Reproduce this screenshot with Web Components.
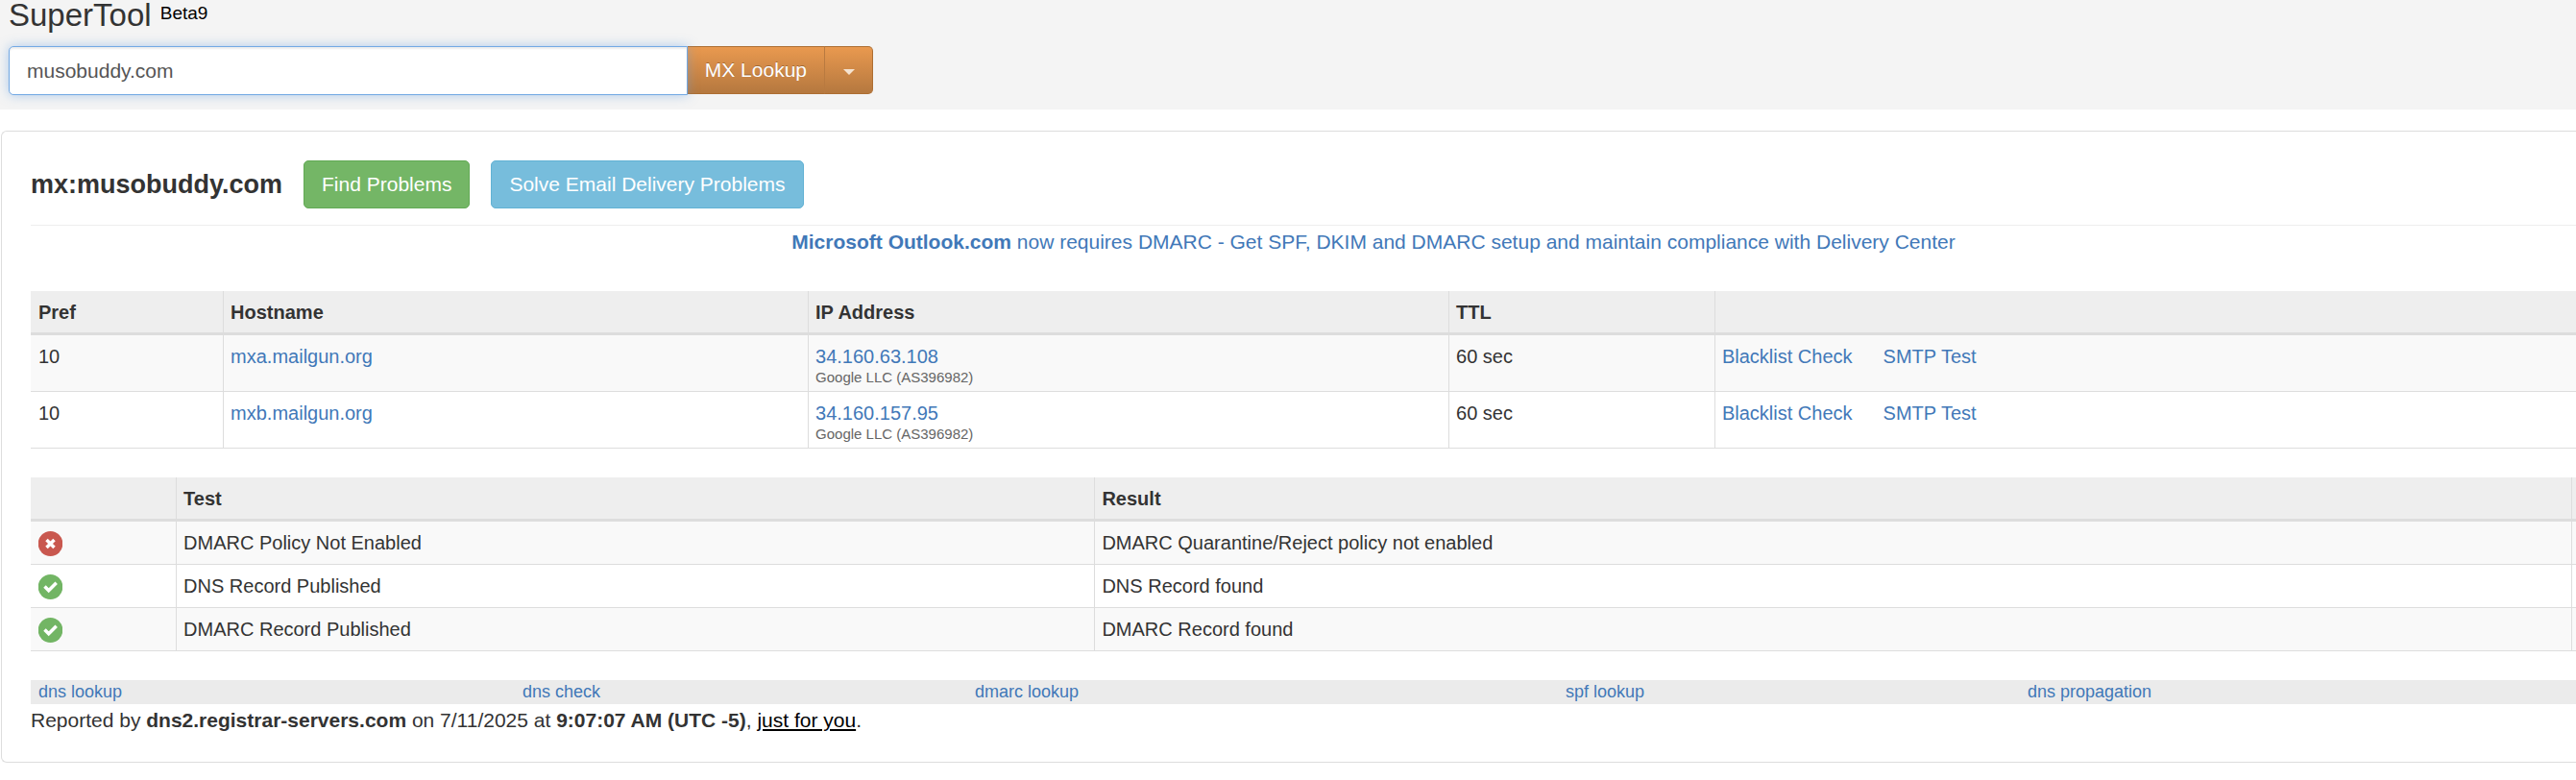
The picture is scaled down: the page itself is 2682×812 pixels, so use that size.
<!DOCTYPE html>
<html lang="en">
<head>
<meta charset="utf-8">
<title>SuperTool</title>
<style>
body { margin: 0; background: #fff; color: #333; font: 20px/27px "Liberation Sans", Arial, sans-serif; }
</style>
</head>
<body>
<super-tool></super-tool>
<script>
const LINK = `a { color: #4178b8; text-decoration: none; } a:hover { text-decoration: underline; }`;

function define(name, html, setup) {
  customElements.define(name, class extends HTMLElement {
    connectedCallback() {
      if (this.shadowRoot) return;
      const t = document.createElement('template');
      t.innerHTML = html;
      const root = this.attachShadow({ mode: 'open' });
      root.append(t.content.cloneNode(true));
      if (setup) setup(this, root);
    }
  });
}

define('status-icon', `
<style>
:host { display: block; height: 28px; padding-top: 1px; box-sizing: border-box; }
svg { display: block; width: 25px; height: 26px; }
.ok, :host([state="ok"]) .bad { display: none; }
:host([state="ok"]) .ok { display: block; }
</style>
<svg class="bad" viewBox="0 0 25 26" role="img" aria-label="Problem"><ellipse cx="12.5" cy="13" rx="12.8" ry="13" fill="#c9584f"/><path d="M8.500 9l8 8M16.500 9l-8 8" stroke="#fff" stroke-width="3.500"/></svg>
<svg class="ok" viewBox="0 0 25 26" role="img" aria-label="OK"><ellipse cx="12.5" cy="13" rx="12.8" ry="13" fill="#72b564"/><path d="M6.500 12.500l4.200 4.300 8-8" fill="none" stroke="#fff" stroke-width="3.500"/></svg>`);

define('action-button', `
<style>
:host { display: block; }
button { height: 50px; padding: 0 18px; border: 1px solid #62a955; border-radius: 5px; background: #74b666; color: #fff; font: 21px/28px "Liberation Sans", Arial, sans-serif; white-space: nowrap; }
:host([kind="info"]) button { background: #77bddc; border-color: #62b2d4; }
</style>
<button type="button"><slot></slot></button>`);

define('search-header', `
<style>
:host { display: block; height: 114px; box-sizing: border-box; padding: 0 9px; background: #f4f4f4; }
h1 { margin: 0; height: 48px; font-weight: 400; font-size: 33px; line-height: 32px; }
sup { color: #000; font-size: 19px; line-height: 19px; vertical-align: 7px; }
form { display: flex; align-items: flex-start; width: 900px; max-width: 100%; }
input { flex: 1; min-width: 0; height: 51px; box-sizing: border-box; padding: 0 18px; border: 1px solid #73a9e4; border-radius: 5px 0 0 5px; background: #fff; color: #555; font: 21px "Liberation Sans", Arial, sans-serif; position: relative; box-shadow: inset 0 2px 2px rgba(0,0,0,.07), 0 0 12px rgba(102,160,225,.5); outline: 0; }
button { height: 50px; box-sizing: border-box; border: 1px solid #ad6e32; border-left-width: 0; background: linear-gradient(#e9994f, #b5783f); color: #fff; font: 21px "Liberation Sans", Arial, sans-serif; text-shadow: 0 -1px 0 rgba(0,0,0,.25); white-space: nowrap; }
.go { padding: 0 18px; border-right-color: #b97a40; }
.more { width: 50px; padding: 0; border-radius: 0 5px 5px 0; }
svg { display: block; width: 12px; height: 6px; margin: 4px auto 0; }
</style>
<h1>SuperTool <sup>Beta9</sup></h1>
<form><input type="text" aria-label="Domain" value="musobuddy.com"><button class="go" type="button">MX Lookup</button><button class="more" type="button" aria-label="More lookups"><svg viewBox="0 0 12 6"><path d="M0 0h12l-6 6z" fill="#f5e3d0"/></svg></button></form>`);

const TABLE = `
:host { display: block; }
table { width: 100%; table-layout: fixed; border-spacing: 0; }
th, td { padding: 9px 7px 7px; text-align: left; vertical-align: top; border-bottom: 1px solid #ddd; border-left: 1px solid #ddd; white-space: nowrap; }
th:first-child, td:first-child { border-left: 0; padding-left: 8px; }
th { background: #eee; border-bottom-width: 3px; }
tbody tr:nth-child(odd) { background: #f9f9f9; }
${LINK}`;

define('record-table', `
<style>${TABLE}
.pref { width: 7.550%; } .host { width: 22.980%; } .ip { width: 25.170%; } .ttl { width: 10.450%; }
small { display: block; font-size: 15px; line-height: 15px; color: #666; }
.links { display: flex; gap: 32px; }
</style>
<table>
<colgroup><col class="pref"><col class="host"><col class="ip"><col class="ttl"><col></colgroup>
<thead><tr><th>Pref</th><th>Hostname</th><th>IP Address</th><th>TTL</th><th></th></tr></thead>
<tbody></tbody>
</table>`, (el, root) => {
  const rows = [['mxa.mailgun.org', '34.160.63.108'], ['mxb.mailgun.org', '34.160.157.95']];
  root.querySelector('tbody').innerHTML = rows.map(([host, ip]) => `<tr><td>10</td><td><a href="#">${host}</a></td><td><a href="#">${ip}</a><small>Google LLC (AS396982)</small></td><td>60 sec</td><td><div class="links"><a href="#">Blacklist Check</a><a href="#">SMTP Test</a></div></td></tr>`).join('');
});

define('test-table', `
<style>${TABLE}
th:last-child, td:last-child { padding-left: 0; padding-right: 0; }
.state { width: 5.700%; } .test { width: 36.090%; } .end { width: 5px; }
</style>
<table>
<colgroup><col class="state"><col class="test"><col><col class="end"></colgroup>
<thead><tr><th></th><th>Test</th><th>Result</th><th></th></tr></thead>
<tbody></tbody>
</table>`, (el, root) => {
  const rows = [
    ['bad', 'DMARC Policy Not Enabled', 'DMARC Quarantine/Reject policy not enabled'],
    ['ok', 'DNS Record Published', 'DNS Record found'],
    ['ok', 'DMARC Record Published', 'DMARC Record found']];
  root.querySelector('tbody').innerHTML = rows.map(([s, t, r]) => `<tr><td><status-icon state="${s}"></status-icon></td><td>${t}</td><td>${r}</td><td></td></tr>`).join('');
});

define('lookup-links', `
<style>
:host { display: block; }
nav { display: grid; grid-template-columns: 504fr 471fr 615fr 481fr 579fr; background: #ebebeb; font-size: 18px; line-height: 25px; }
a { padding-left: 8px; }
${LINK}
</style>
<nav><a href="#">dns lookup</a><a href="#">dns check</a><a href="#">dmarc lookup</a><a href="#">spf lookup</a><a href="#">dns propagation</a></nav>`);

define('result-card', `
<style>
:host { display: block; margin: 22px 0 0 1px; padding: 30px 0 26px 30px; border: 1px solid #ddd; border-right: 0; border-radius: 6px 0 0 6px; }
header { display: flex; align-items: center; gap: 22px; padding-bottom: 17px; border-bottom: 1px solid #eee; }
h2 { margin: 0; font-size: 27px; line-height: 30px; }
.notice { margin: 3px 0 38px; padding-left: 146px; text-align: center; font-size: 21px; }
test-table { margin: 30px 0; }
.report { margin: 0; padding: 3px 0 4px; font-size: 21px; }
${LINK}
a.you { color: #000; text-decoration: underline; }
</style>
<header><h2>mx:musobuddy.com</h2><action-button>Find Problems</action-button><action-button kind="info">Solve Email Delivery Problems</action-button></header>
<p class="notice"><a href="#"><b>Microsoft Outlook.com</b> now requires DMARC - Get SPF, DKIM and DMARC setup and maintain compliance with Delivery Center</a></p>
<record-table></record-table>
<test-table></test-table>
<lookup-links></lookup-links>
<p class="report">Reported by <b>dns2.registrar-servers.com</b> on 7/11/2025 at <b>9:07:07 AM (UTC -5)</b>, <a class="you" href="#">just for you</a>.</p>`);

define('super-tool', `
<style>:host { display: block; }</style>
<search-header></search-header>
<main><result-card></result-card></main>`);
</script>
</body>
</html>
